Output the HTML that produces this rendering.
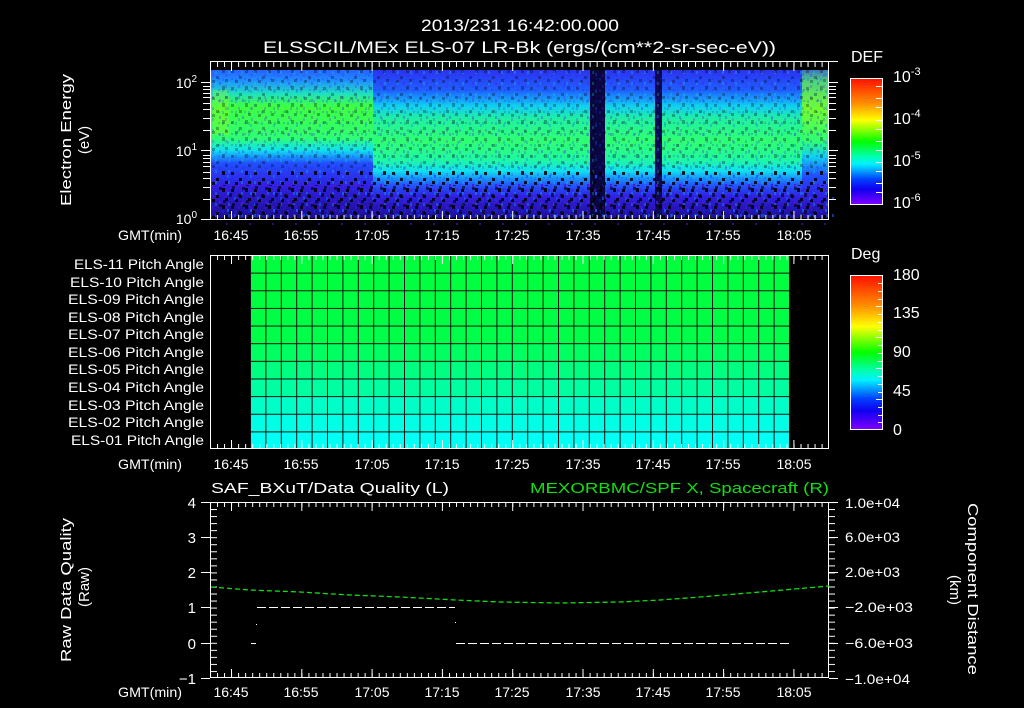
<!DOCTYPE html>
<html><head><meta charset="utf-8"><style>
html,body{margin:0;padding:0;background:#000;}
svg{display:block;}
text{font-family:"Liberation Sans",sans-serif;fill:#fff;}
</style></head><body>
<svg width="1024" height="708" viewBox="0 0 1024 708" xmlns="http://www.w3.org/2000/svg">
<defs>
<pattern id="mn" patternUnits="userSpaceOnUse" x="210" y="0" width="7.03" height="708"><rect x="0" y="0" width="1" height="708" fill="#fff"/></pattern>
<pattern id="mj" patternUnits="userSpaceOnUse" x="231" y="0" width="70.3" height="708"><rect x="0" y="0" width="1" height="708" fill="#fff"/></pattern>
<pattern id="vt" patternUnits="userSpaceOnUse" x="0" y="502" width="1024" height="7.04"><rect x="0" y="0" width="1024" height="1" fill="#fff"/></pattern>
<pattern id="grid" patternUnits="userSpaceOnUse" x="250" y="255" width="15.4" height="17.64"><rect x="0" y="0" width="1" height="18" fill="#111"/><rect x="0" y="0" width="16" height="1" fill="#111"/></pattern>
<pattern id="spk" patternUnits="userSpaceOnUse" x="0" y="0" width="23" height="17">
<rect x="1" y="2" width="3" height="3" fill="#000"/><rect x="9" y="8" width="3" height="3" fill="#000"/><rect x="15" y="1" width="3" height="4" fill="#000"/><rect x="5" y="12" width="3" height="3" fill="#000"/><rect x="18" y="11" width="3" height="3" fill="#000"/><rect x="12" y="14" width="2" height="3" fill="#5010e0"/><rect x="20" y="5" width="2" height="3" fill="#1060ff"/></pattern>
<pattern id="spk2" patternUnits="userSpaceOnUse" x="0" y="0" width="13" height="11">
<rect x="1" y="1" width="2" height="3" fill="#0050ff"/><rect x="7" y="5" width="2" height="3" fill="#00f0e0"/><rect x="10" y="1" width="2" height="2" fill="#2020ff"/><rect x="4" y="8" width="2" height="3" fill="#6010ff"/></pattern>
<linearGradient id="gA" x1="0" y1="62" x2="0" y2="220" gradientUnits="userSpaceOnUse">
<stop offset="0" stop-color="#2840ff"/><stop offset="0.12" stop-color="#2090ff"/><stop offset="0.2" stop-color="#20e0c0"/><stop offset="0.28" stop-color="#40ff40"/><stop offset="0.48" stop-color="#30ff70"/><stop offset="0.56" stop-color="#10e0f0"/><stop offset="0.64" stop-color="#2050ff"/><stop offset="0.78" stop-color="#3020e0"/><stop offset="1" stop-color="#1c0c90"/></linearGradient>
<linearGradient id="gB" x1="0" y1="62" x2="0" y2="220" gradientUnits="userSpaceOnUse">
<stop offset="0" stop-color="#3020e8"/><stop offset="0.18" stop-color="#2060ff"/><stop offset="0.28" stop-color="#10d0f0"/><stop offset="0.36" stop-color="#20f0a0"/><stop offset="0.5" stop-color="#30ff70"/><stop offset="0.62" stop-color="#20f8a0"/><stop offset="0.69" stop-color="#10e0f0"/><stop offset="0.77" stop-color="#2060ff"/><stop offset="0.85" stop-color="#3020e0"/><stop offset="1" stop-color="#1c0c90"/></linearGradient>
<linearGradient id="gD" x1="0" y1="62" x2="0" y2="220" gradientUnits="userSpaceOnUse">
<stop offset="0" stop-color="#3030f0"/><stop offset="0.12" stop-color="#50d080"/><stop offset="0.3" stop-color="#70ff30"/><stop offset="0.5" stop-color="#30ff70"/><stop offset="0.6" stop-color="#10d0f0"/><stop offset="0.72" stop-color="#2050ff"/><stop offset="0.85" stop-color="#3020e0"/><stop offset="1" stop-color="#1c0c90"/></linearGradient>
<linearGradient id="cb" x1="0" y1="0" x2="0" y2="1">
<stop offset="0" stop-color="#ff1000"/><stop offset="0.2" stop-color="#ff9000"/><stop offset="0.33" stop-color="#ffff00"/><stop offset="0.5" stop-color="#00ff00"/><stop offset="0.62" stop-color="#00ffb0"/><stop offset="0.68" stop-color="#00f0ff"/><stop offset="0.8" stop-color="#0040ff"/><stop offset="0.88" stop-color="#1000f0"/><stop offset="1" stop-color="#8000ff"/></linearGradient>
</defs>

<text x="421" y="31" font-size="17" textLength="198" lengthAdjust="spacingAndGlyphs">2013/231 16:42:00.000</text>
<text x="263" y="53" font-size="17" textLength="513" lengthAdjust="spacingAndGlyphs">ELSSCIL/MEx ELS-07 LR-Bk  (ergs/(cm**2-sr-sec-eV))</text>

<rect x="211" y="70" width="618" height="150" fill="#2a18d8"/>
<rect x="211" y="70" width="162" height="150" fill="url(#gA)"/>
<rect x="373" y="70" width="217" height="150" fill="url(#gB)"/>
<rect x="590" y="70" width="15" height="150" fill="#0a0640"/>
<rect x="605" y="70" width="50" height="150" fill="url(#gB)"/>
<rect x="655" y="70" width="7" height="150" fill="#100850"/>
<rect x="662" y="70" width="140" height="150" fill="url(#gB)"/>
<rect x="802" y="70" width="27" height="150" fill="url(#gD)"/>
<rect x="213" y="90" width="16" height="45" fill="#a8ff10" opacity="0.3"/>
<rect x="211" y="70" width="618" height="150" fill="url(#spk2)" opacity="0.25"/>
<rect x="211" y="70" width="618" height="150" fill="url(#spk)" opacity="0.3"/>
<rect x="211" y="170" width="618" height="50" fill="url(#spk)" opacity="0.8"/>
<rect x="211" y="180" width="618" height="40" fill="url(#spk)" opacity="0.6" transform="translate(7,5)"/>
<rect x="211" y="62" width="618" height="8" fill="#000"/>
<rect x="211" y="218" width="618" height="2" fill="#000"/>
<rect x="210.5" y="61.5" width="618" height="158" fill="none" stroke="#fff" stroke-width="1"/>
<line x1="829" y1="61.5" x2="838" y2="61.5" stroke="#fff"/>
<line x1="201" y1="219.5" x2="210" y2="219.5" stroke="#fff"/>
<rect x="210" y="62" width="619" height="5" fill="url(#mn)"/>
<rect x="210" y="62" width="619" height="9" fill="url(#mj)"/>
<rect x="210" y="215" width="619" height="5" fill="url(#mn)"/>
<rect x="210" y="211" width="619" height="9" fill="url(#mj)"/>
<g stroke="#fff" stroke-width="1">
<path d="M201 82.5H210M201 150.5H210M203 199.5H210M203 187.5H210M203 178.5H210M203 172.5H210M203 166.5H210M203 162.5H210M203 158.5H210M203 155.5H210M203 130.5H210M203 118.5H210M203 109.5H210M203 103.5H210M203 97.5H210M203 93.5H210M203 89.5H210M203 86.5H210"/>
<path d="M829 82.5H838M829 150.5H838M829 199.5H836M829 187.5H836M829 178.5H836M829 172.5H836M829 166.5H836M829 162.5H836M829 158.5H836M829 155.5H836M829 130.5H836M829 118.5H836M829 109.5H836M829 103.5H836M829 97.5H836M829 93.5H836M829 89.5H836M829 86.5H836"/>
</g>
<text x="197" y="88" font-size="14" text-anchor="end">10<tspan font-size="10" dy="-6">2</tspan></text>
<text x="197" y="156" font-size="14" text-anchor="end">10<tspan font-size="10" dy="-6">1</tspan></text>
<text x="197" y="224" font-size="14" text-anchor="end">10<tspan font-size="10" dy="-6">0</tspan></text>
<text transform="translate(71,140) rotate(-90)" font-size="15" text-anchor="middle" textLength="132" lengthAdjust="spacingAndGlyphs">Electron Energy</text>
<text transform="translate(89,140) rotate(-90)" font-size="15" text-anchor="middle">(eV)</text>
<g font-size="14" text-anchor="middle">
<text x="150" y="240" textLength="64" lengthAdjust="spacingAndGlyphs">GMT(min)</text>
<text x="231" y="240">16:45</text><text x="301" y="240">16:55</text><text x="372" y="240">17:05</text><text x="442" y="240">17:15</text><text x="512" y="240">17:25</text><text x="583" y="240">17:35</text><text x="653" y="240">17:45</text><text x="723" y="240">17:55</text><text x="794" y="240">18:05</text>
</g>
<text x="851" y="62" font-size="16">DEF</text>
<rect x="850.5" y="78.5" width="32" height="126" fill="url(#cb)" stroke="#fff"/>
<g stroke="#fff"><path d="M876 86.5H882M876 98.5H882M876 107.5H882M876 120.5H882M876 129.5H882M876 141.5H882M876 150.5H882M876 162.5H882M876 171.5H882M876 183.5H882M876 192.5H882"/></g>
<g font-size="16"><text x="893" y="82">10<tspan font-size="11" dy="-7">-3</tspan></text><text x="893" y="124">10<tspan font-size="11" dy="-7">-4</tspan></text><text x="893" y="166">10<tspan font-size="11" dy="-7">-5</tspan></text><text x="893" y="208">10<tspan font-size="11" dy="-7">-6</tspan></text></g>

<rect x="250" y="255" width="539" height="18" fill="#00ff3c"/>
<rect x="250" y="273" width="539" height="18" fill="#00ff3e"/>
<rect x="250" y="291" width="539" height="17" fill="#00ff40"/>
<rect x="250" y="308" width="539" height="18" fill="#00ff44"/>
<rect x="250" y="326" width="539" height="18" fill="#00ff48"/>
<rect x="250" y="344" width="539" height="18" fill="#00ff60"/>
<rect x="250" y="362" width="539" height="17" fill="#00ff80"/>
<rect x="250" y="379" width="539" height="18" fill="#00ffa0"/>
<rect x="250" y="397" width="539" height="17" fill="#00ffc8"/>
<rect x="250" y="414" width="539" height="18" fill="#00ffe4"/>
<rect x="250" y="432" width="539" height="17" fill="#00fff4"/>
<rect x="250" y="255" width="539" height="194" fill="url(#grid)"/>
<rect x="210.5" y="255.5" width="618" height="193" fill="none" stroke="#fff"/>
<rect x="210" y="256" width="619" height="4" fill="url(#mn)"/>
<rect x="210" y="256" width="619" height="8" fill="url(#mj)"/>
<rect x="210" y="444" width="619" height="4" fill="url(#mn)"/>
<rect x="210" y="440" width="619" height="8" fill="url(#mj)"/>
<g font-size="13.5" text-anchor="end">
<text x="204" y="269" textLength="130" lengthAdjust="spacingAndGlyphs">ELS-11 Pitch Angle</text>
<text x="204" y="287" textLength="134" lengthAdjust="spacingAndGlyphs">ELS-10 Pitch Angle</text>
<text x="204" y="304" textLength="136" lengthAdjust="spacingAndGlyphs">ELS-09 Pitch Angle</text>
<text x="204" y="322" textLength="136" lengthAdjust="spacingAndGlyphs">ELS-08 Pitch Angle</text>
<text x="204" y="339" textLength="136" lengthAdjust="spacingAndGlyphs">ELS-07 Pitch Angle</text>
<text x="204" y="357" textLength="136" lengthAdjust="spacingAndGlyphs">ELS-06 Pitch Angle</text>
<text x="204" y="374" textLength="136" lengthAdjust="spacingAndGlyphs">ELS-05 Pitch Angle</text>
<text x="204" y="392" textLength="136" lengthAdjust="spacingAndGlyphs">ELS-04 Pitch Angle</text>
<text x="204" y="410" textLength="136" lengthAdjust="spacingAndGlyphs">ELS-03 Pitch Angle</text>
<text x="204" y="427" textLength="136" lengthAdjust="spacingAndGlyphs">ELS-02 Pitch Angle</text>
<text x="204" y="445" textLength="133" lengthAdjust="spacingAndGlyphs">ELS-01 Pitch Angle</text>
</g>
<g font-size="14" text-anchor="middle">
<text x="150" y="469" textLength="64" lengthAdjust="spacingAndGlyphs">GMT(min)</text>
<text x="231" y="469">16:45</text><text x="301" y="469">16:55</text><text x="372" y="469">17:05</text><text x="442" y="469">17:15</text><text x="512" y="469">17:25</text><text x="583" y="469">17:35</text><text x="653" y="469">17:45</text><text x="723" y="469">17:55</text><text x="794" y="469">18:05</text>
</g>
<text x="851" y="259" font-size="16">Deg</text>
<rect x="850.5" y="275.5" width="32" height="154" fill="url(#cb)" stroke="#fff"/>
<g stroke="#fff"><path d="M878 283.5H882M878 291.5H882M878 299.5H882M876 306.5H882M878 314.5H882M878 322.5H882M878 330.5H882M876 337.5H882M878 345.5H882M878 353.5H882M878 361.5H882M876 368.5H882M878 376.5H882M878 384.5H882M878 392.5H882M876 399.5H882M878 407.5H882M878 415.5H882M878 422.5H882"/></g>
<g font-size="16"><text x="893" y="280">180</text><text x="893" y="318">135</text><text x="893" y="357">90</text><text x="893" y="396">45</text><text x="893" y="435">0</text></g>

<text x="211" y="493" font-size="15" textLength="238" lengthAdjust="spacingAndGlyphs">SAF_BXuT/Data Quality (L)</text>
<text x="530" y="493" font-size="15" style="fill:#10e010" textLength="299" lengthAdjust="spacingAndGlyphs">MEXORBMC/SPF X, Spacecraft (R)</text>
<rect x="210.5" y="502.5" width="618" height="175" fill="none" stroke="#fff"/>
<rect x="210" y="503" width="619" height="4" fill="url(#mn)"/>
<rect x="210" y="503" width="619" height="8" fill="url(#mj)"/>
<rect x="210" y="673" width="619" height="4" fill="url(#mn)"/>
<rect x="210" y="669" width="619" height="8" fill="url(#mj)"/>
<rect x="211" y="502" width="6" height="176" fill="url(#vt)"/>
<rect x="829" y="502" width="6" height="176" fill="url(#vt)"/>
<g stroke="#fff"><path d="M201 502.5H210M201 537.5H210M201 572.5H210M201 607.5H210M201 643.5H210M201 678.5H210"/><path d="M829 502.5H838M829 537.5H838M829 572.5H838M829 607.5H838M829 643.5H838M829 678.5H838"/></g>
<g font-size="15" text-anchor="end"><text x="196" y="508">4</text><text x="196" y="543">3</text><text x="196" y="578">2</text><text x="196" y="613">1</text><text x="196" y="649">0</text><text x="196" y="684">−1</text></g>
<g font-size="14"><text x="845" y="508" textLength="55" lengthAdjust="spacingAndGlyphs">1.0e+04</text><text x="845" y="542" textLength="55" lengthAdjust="spacingAndGlyphs">6.0e+03</text><text x="845" y="577" textLength="55" lengthAdjust="spacingAndGlyphs">2.0e+03</text><text x="845" y="612" textLength="68" lengthAdjust="spacingAndGlyphs">−2.0e+03</text><text x="845" y="648" textLength="68" lengthAdjust="spacingAndGlyphs">−6.0e+03</text><text x="845" y="684" textLength="65" lengthAdjust="spacingAndGlyphs">−1.0e+04</text></g>
<polyline points="211,587 250,590 300,592 350,595 400,597 456,600 500,602 560,603 620,602 660,600 700,597 760,592 829,586" fill="none" stroke="#10e010" stroke-width="1.3" stroke-dasharray="5,3"/>
<line x1="257" y1="607.5" x2="455" y2="607.5" stroke="#fff" stroke-dasharray="9,3"/>
<line x1="456" y1="643.5" x2="789" y2="643.5" stroke="#fff" stroke-dasharray="9,3"/>
<line x1="251" y1="643.5" x2="256" y2="643.5" stroke="#fff"/>
<rect x="256" y="624" width="1" height="1" fill="#fff"/><rect x="455" y="622" width="1" height="1" fill="#fff"/>
<text transform="translate(71,590) rotate(-90)" font-size="15" text-anchor="middle" textLength="144" lengthAdjust="spacingAndGlyphs">Raw Data Quality</text>
<text transform="translate(89,587) rotate(-90)" font-size="15" text-anchor="middle">(Raw)</text>
<text transform="translate(968,589) rotate(90)" font-size="15" text-anchor="middle" textLength="172" lengthAdjust="spacingAndGlyphs">Component Distance</text>
<text transform="translate(950,590) rotate(90)" font-size="15" text-anchor="middle">(km)</text>
<g font-size="14" text-anchor="middle">
<text x="150" y="697" textLength="64" lengthAdjust="spacingAndGlyphs">GMT(min)</text>
<text x="231" y="697">16:45</text><text x="301" y="697">16:55</text><text x="372" y="697">17:05</text><text x="442" y="697">17:15</text><text x="512" y="697">17:25</text><text x="583" y="697">17:35</text><text x="653" y="697">17:45</text><text x="723" y="697">17:55</text><text x="794" y="697">18:05</text>
</g>
</svg>
</body></html>
